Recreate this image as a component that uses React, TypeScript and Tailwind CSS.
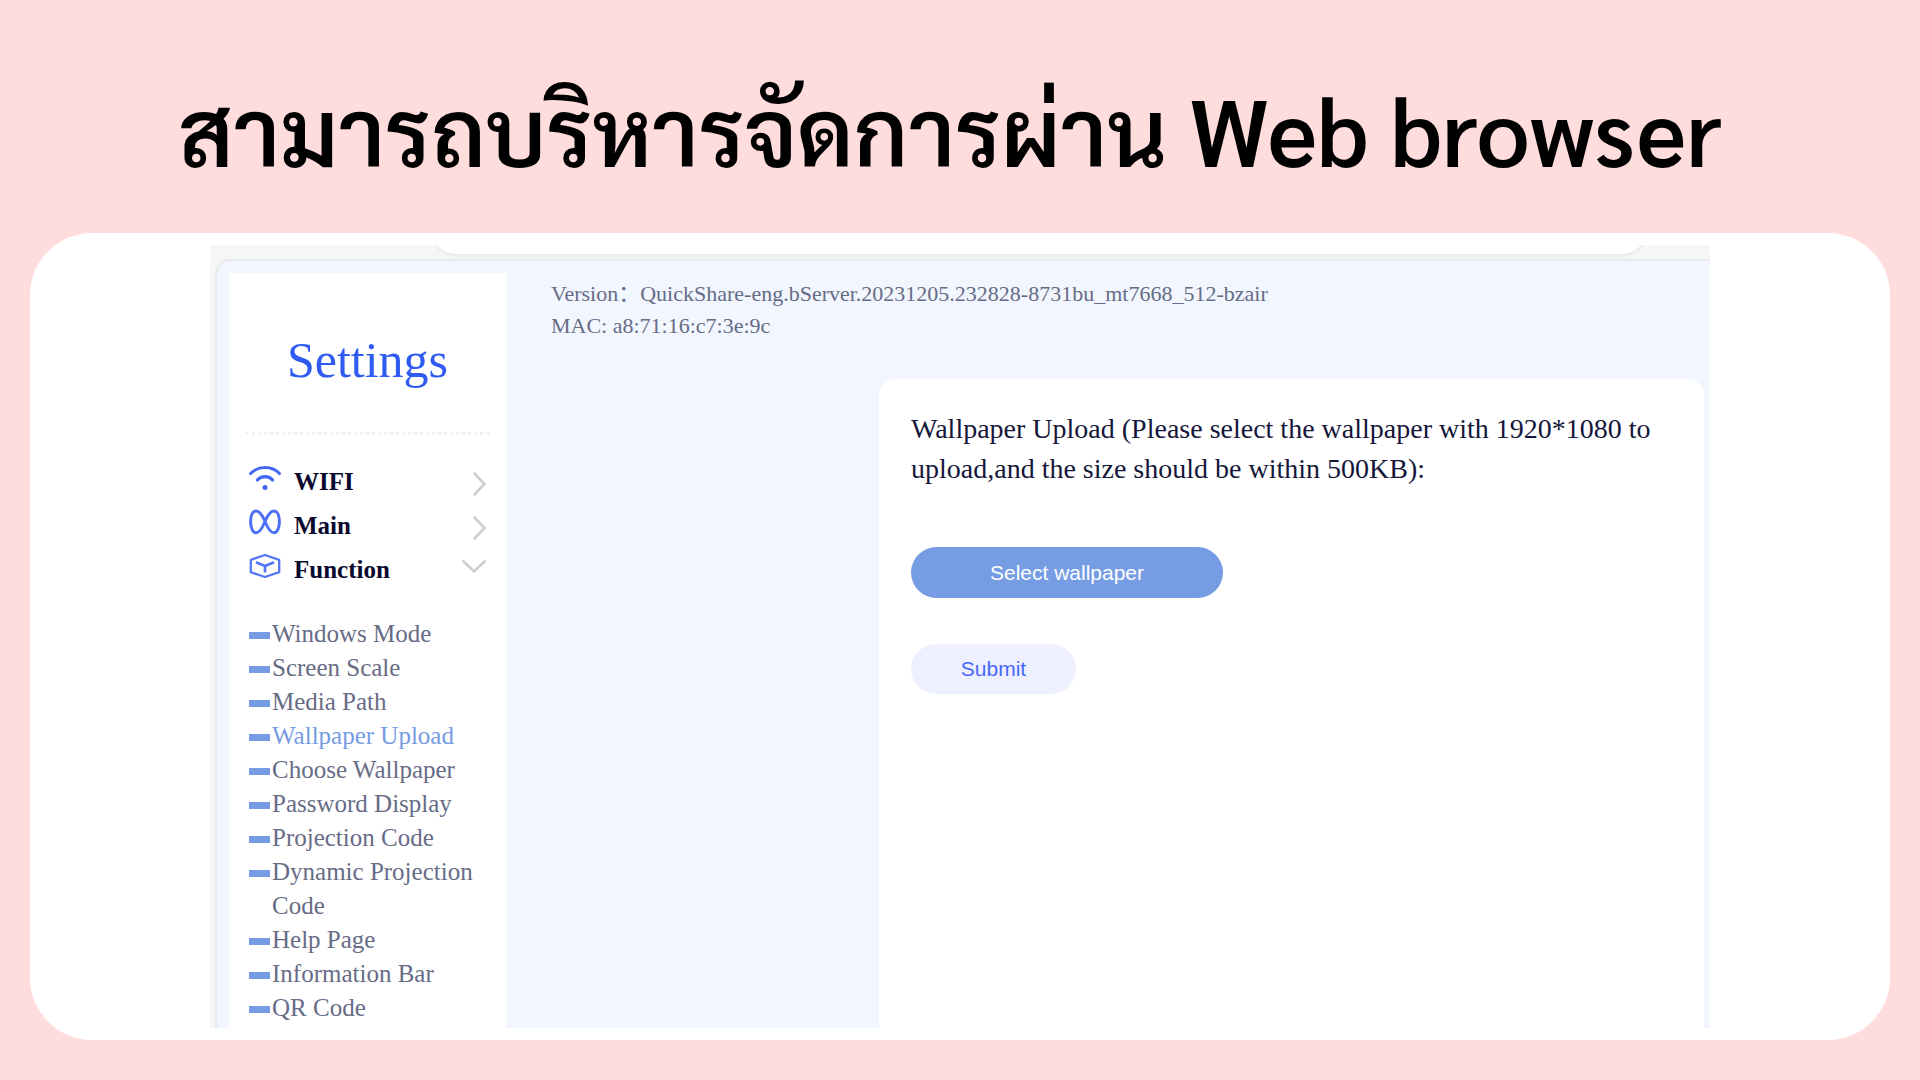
import React, { useState } from 'react';
import { clsx } from 'clsx';

const functionItems = [
	'Windows Mode',
	'Screen Scale',
	'Media Path',
	'Wallpaper Upload',
	'Choose Wallpaper',
	'Password Display',
	'Projection Code',
	'Dynamic Projection Code',
	'Help Page',
	'Information Bar',
	'QR Code',
];

const WifiIcon = () => (
	<svg viewBox="0 0 32 26" className="w-8 h-[26px]" fill="none" stroke="#4168f5" strokeLinecap="round">
		<path d="M1.6 8.6C9 0.6 23 0.6 30.4 8.6" strokeWidth="3" />
		<path d="M8.4 15C12 10.6 20 10.6 23.6 15" strokeWidth="3.2" />
		<circle cx="16" cy="22.5" r="2.5" fill="#4168f5" stroke="none" />
	</svg>
);

const MainIcon = () => (
	<svg viewBox="0 0 32 26" className="w-8 h-[26px]" fill="none" stroke="#4b70f6" strokeWidth="3">
		<path d="M16 12.5C13.5 6.5 10.8 2 7.2 2C3.6 2 1.6 6.6 1.6 12.8C1.6 19.2 3.8 23.8 7.2 23.8C10.8 23.8 13.5 18.5 16 12.5C18.5 6.5 21.2 2 24.8 2C28.4 2 30.4 6.6 30.4 12.8C30.4 19.2 28.2 23.8 24.8 23.8C21.2 23.8 18.5 18.5 16 12.5Z" />
	</svg>
);

const FunctionIcon = () => (
	<svg viewBox="0 0 32 26" className="w-8 h-[26px]" fill="none" stroke="#5577f6" strokeWidth="2.3">
		<path d="M16 2L30.2 6.8V19.2L16 24L1.8 19.2V6.8Z" strokeLinejoin="round" />
		<path d="M7 9.2L16 13L25 9.2M16 13V19.5" strokeWidth="2.6" />
	</svg>
);

const Chevron = ({ open }: { open: boolean }) => (
	<svg
		viewBox="0 0 24 24"
		className="w-6 h-6 mt-1 ml-auto"
		fill="none"
		stroke="#cdced2"
		strokeWidth="2.6"
		strokeLinecap="round"
	>
		{open ? <path d="M1.5 1.5L12 11.5L22.5 1.5" /> : <path d="M12.5 1.5L22.5 12L12.5 22.5" />}
	</svg>
);

const groups = [
	{ name: 'WIFI', icon: <WifiIcon /> },
	{ name: 'Main', icon: <MainIcon /> },
	{ name: 'Function', icon: <FunctionIcon /> },
];

const Sidebar = () => {
	const [opened, setOpened] = useState('Function');
	const [active, setActive] = useState('Wallpaper Upload');
	return (
		<aside className="w-[277px] shrink-0 bg-white">
			<h2 className="pt-[62px] text-center text-[50px] leading-[50px] text-[#2f5bf3]">Settings</h2>
			<div className="mt-[47px] mx-4 border-t-3 border-dotted border-[#f0f0f0]" />
			<nav className="pt-[25px] px-5">
				{groups.map((group) => (
					<button
						key={group.name}
						type="button"
						className="flex items-center w-full h-11 text-[25px] font-bold text-[#0a0a2e] cursor-pointer"
						onClick={() => setOpened(opened === group.name ? '' : group.name)}
					>
						<span className="mb-2 mr-[13px]">{group.icon}</span>
						{group.name}
						<Chevron open={opened === group.name} />
					</button>
				))}
				{opened === 'Function' && (
					<ul className="mt-[25px] text-[25px] leading-[34px] text-[#676c86]">
						{functionItems.map((item) => (
							<li key={item}>
								<a
									href="#"
									className={clsx('flex items-start', active === item && 'text-[#769ce4]')}
									onClick={() => setActive(item)}
								>
									<span className="w-[21px] h-[7px] mt-[15px] mr-0.5 shrink-0 bg-[#769ce4]" />
									{item}
								</a>
							</li>
						))}
					</ul>
				)}
			</nav>
		</aside>
	);
};

const WallpaperUpload = () => (
	<section className="flex-1 ml-[373px] mr-1.5 px-8 pt-[30px] bg-white rounded-t-2xl">
		<p className="text-[28px] leading-10 text-[#14163a]">
			Wallpaper Upload (Please select the wallpaper with 1920*1080 to upload,and the size should be within
			500KB):
		</p>
		<div className="flex flex-col items-start gap-[46px] mt-[58px] font-['Liberation_Sans',sans-serif] text-[21px]">
			<button type="button" className="w-[312px] h-[51px] rounded-full bg-[#769ce4] text-white">
				Select wallpaper
			</button>
			<button type="button" className="w-[165px] h-[50px] rounded-full bg-[#eef0ff] text-[#4768f8]">
				Submit
			</button>
		</div>
	</section>
);

export default function App() {
	return (
		<div className="flex flex-col min-h-screen bg-[#ffdddc]">
			<h1 className="pt-[69px] pb-11 pr-5 text-center text-[93px] leading-[120px] font-semibold text-black font-['Sarabun','Noto_Sans_Thai_Looped','Noto_Sans',sans-serif]">
				สามารถบริหารจัดการผ่าน Web browser
			</h1>
			<main className="flex flex-col flex-1 mx-[30px] mb-10 px-[180px] py-3 bg-white rounded-[62px]">
				<div className="flex flex-col flex-1 bg-[#f6f6f6] overflow-hidden font-['Liberation_Serif','Noto_Sans_CJK_SC',serif]">
					{/* bottom edge of the address bar */}
					<div className="h-10 -mt-[31px] ml-[222px] mr-16 rounded-b-3xl bg-white shadow-[0_2px_3px_#e8e8e8]" />
					<div className="flex flex-1 mt-[5px] ml-[5px] pt-3 pl-3 bg-[#f1f6ff] rounded-tl-2xl border-t-2 border-l-2 border-[#e9eaec]">
						<Sidebar />
						<div className="flex flex-col flex-1">
							<div className="h-[106px] pl-[45px] pt-[5px] text-[22px] leading-8 text-[#676c86]">
								<p>Version：QuickShare-eng.bServer.20231205.232828-8731bu_mt7668_512-bzair</p>
								<p>MAC: a8:71:16:c7:3e:9c</p>
							</div>
							<WallpaperUpload />
						</div>
					</div>
				</div>
			</main>
		</div>
	);
}
